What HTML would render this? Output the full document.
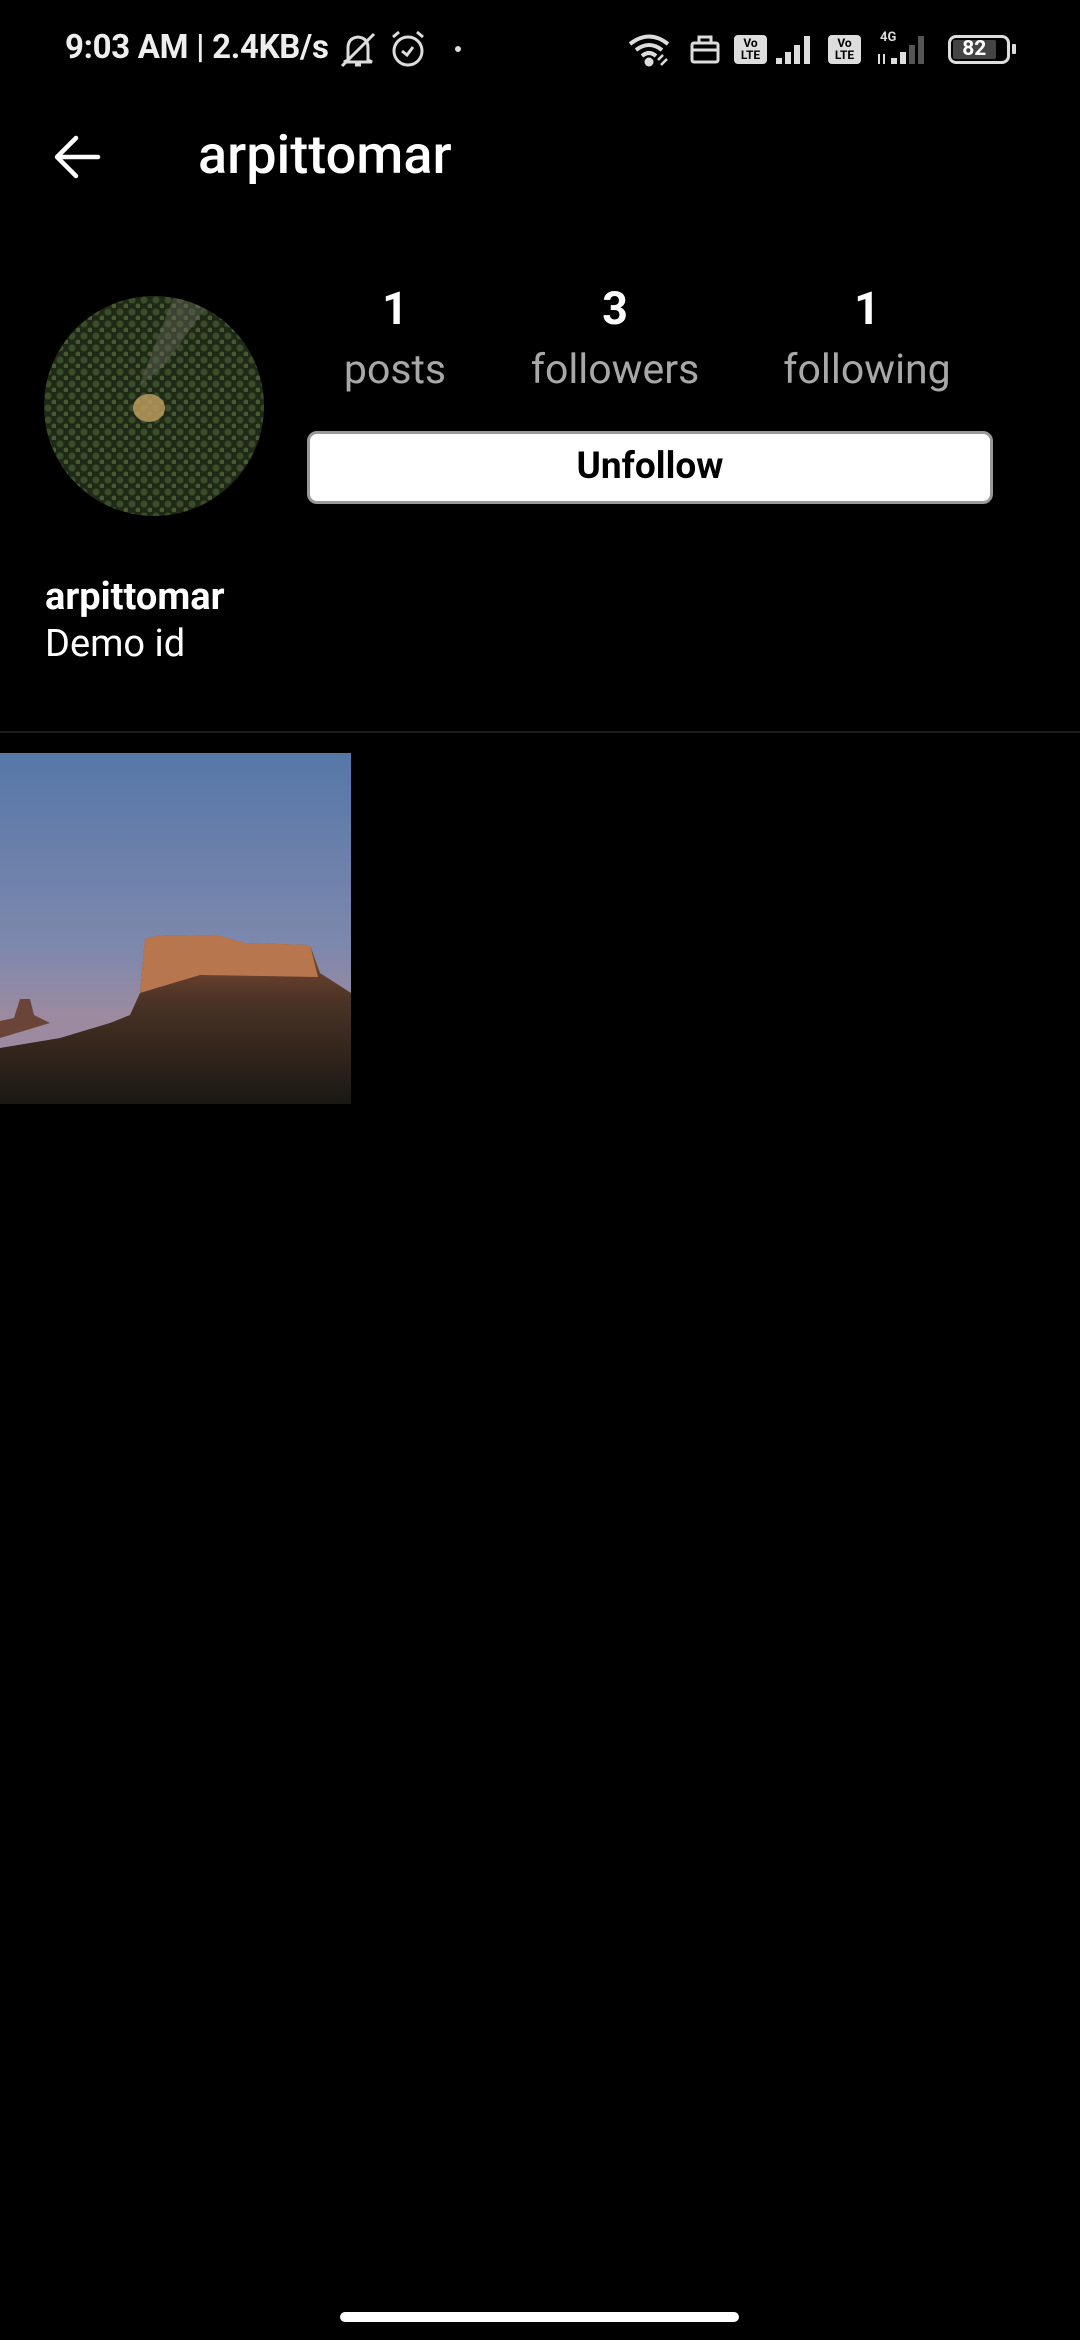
<!DOCTYPE html>
<html><head><meta charset="utf-8"><style>
*{margin:0;padding:0;box-sizing:border-box}
body{width:1080px;height:2340px;background:#000;position:relative;overflow:hidden;font-family:"Roboto","Liberation Sans",sans-serif;color:#fff}
.a{position:absolute}
.st{top:28px;font-size:33px;font-weight:700;color:#eee;letter-spacing:-0.3px;white-space:nowrap}
.num{font-size:45px;font-weight:700;text-align:center;width:240px}
.lbl{font-size:41px;color:#a8a8a8;text-align:center;width:280px}
</style></head><body>
<div class="a st" style="left:65px">9:03 AM | 2.4KB/s</div>
<svg class="a" style="left:338px;top:30px" width="44" height="40" viewBox="0 0 44 40" fill="none" stroke="#ddd" stroke-width="3"><path d="M10 30 L10 18 Q10 8 20 7 Q30 8 30 18 L30 30 L34 32 L6 32Z"/><path d="M17 35 h6"/><path d="M4 36 L36 4"/></svg>
<svg class="a" style="left:388px;top:28px" width="40" height="42" viewBox="0 0 40 42" fill="none" stroke="#ddd" stroke-width="3"><circle cx="20" cy="23" r="14"/><path d="M14 23 l5 4 l6 -8"/><path d="M5 9 l6 -5 M35 9 l-6 -5"/></svg>
<div class="a" style="left:455px;top:46px;width:6px;height:6px;border-radius:50%;background:#ddd"></div>
<svg class="a" style="left:627px;top:33px" width="48" height="34" viewBox="0 0 48 34" fill="none" stroke="#ddd" stroke-width="4"><path d="M3 11 Q22 -4 41 11"/><path d="M9 17 Q22 7 35 17"/><path d="M15 23 Q22 17 29 23"/><circle cx="22" cy="29" r="2.5" fill="#ddd"/><path d="M36 22 l-5 5 M40 26 l-6 6" stroke-width="2.5"/></svg>
<svg class="a" style="left:690px;top:34px" width="30" height="30" viewBox="0 0 30 30" fill="none" stroke="#ddd" stroke-width="3"><rect x="2" y="9" width="26" height="19" rx="2"/><path d="M9 9 V3 H21 V9 M2 16 H28"/></svg>
<div class="a" style="left:734px;top:35px;width:33px;height:29px;background:#ddd;border-radius:4px;color:#000;font-size:12px;font-weight:700;line-height:12px;text-align:center;padding-top:2px">Vo<br>LTE</div>
<svg class="a" style="left:774px;top:34px" width="40" height="30"><path d="M2 30 V24 H8 V30Z M11 30 V18 H17 V30Z M20 30 V11 H26 V30Z M30 30 V2 H36 V30Z" fill="#ddd"/></svg>
<div class="a" style="left:828px;top:35px;width:33px;height:29px;background:#ddd;border-radius:4px;color:#000;font-size:12px;font-weight:700;line-height:12px;text-align:center;padding-top:2px">Vo<br>LTE</div>
<div class="a" style="left:880px;top:30px;font-size:13px;font-weight:700;color:#ddd">4G</div>
<svg class="a" style="left:875px;top:34px" width="60" height="30"><path d="M16 30 V24 H22 V30Z M25 30 V18 H31 V30Z" fill="#ddd"/><path d="M34 30 V11 H40 V30Z M43 30 V2 H49 V30Z" fill="#555"/><path d="M4 30 V20 M9 20 V30" stroke="#ddd" stroke-width="2"/></svg>
<div class="a" style="left:948px;top:35px;width:62px;height:29px;border:3px solid #ddd;border-radius:8px;padding:2px"><div style="background:#444;height:100%;width:82%;border-radius:2px;font-size:21px;font-weight:700;color:#fff;line-height:19px;text-align:center">82</div></div>
<div class="a" style="left:1012px;top:44px;width:4px;height:10px;background:#ddd;border-radius:1px"></div>

<svg class="a" style="left:52px;top:134px" width="50" height="46" viewBox="0 0 50 46" fill="none" stroke="#fff" stroke-width="4.5" stroke-linecap="round" stroke-linejoin="round"><path d="M46 23 H6 M24 4 L5 23 L24 42"/></svg>
<div class="a" style="left:198px;top:124px;font-size:54px;font-weight:500">arpittomar</div>

<svg class="a" style="left:44px;top:296px" width="220" height="220" viewBox="0 0 220 220">
<defs><clipPath id="c"><circle cx="110" cy="110" r="110"/></clipPath>
<pattern id="t" width="12" height="12" patternUnits="userSpaceOnUse"><rect width="12" height="12" fill="#1f2a16"/><circle cx="4" cy="4" r="3.5" fill="#3a4c2a"/><circle cx="10" cy="10" r="2.5" fill="#4a5a34"/></pattern></defs>
<g clip-path="url(#c)"><rect width="220" height="220" fill="url(#t)"/><path d="M130 0 L170 0 L120 70 L95 90Z" fill="#6a6a5e" opacity=".4"/><ellipse cx="105" cy="112" rx="16" ry="14" fill="#b89a5c" opacity=".85"/></g></svg>

<div class="a num" style="left:275px;top:282px">1</div>
<div class="a lbl" style="left:255px;top:346px">posts</div>
<div class="a num" style="left:495px;top:282px">3</div>
<div class="a lbl" style="left:475px;top:346px">followers</div>
<div class="a num" style="left:747px;top:282px">1</div>
<div class="a lbl" style="left:727px;top:346px">following</div>

<div class="a" style="left:307px;top:431px;width:686px;height:73px;background:#fff;border:3px solid #999;border-radius:10px;color:#000;font-size:37px;font-weight:700;text-align:center;line-height:66px">Unfollow</div>

<div class="a" style="left:45px;top:575px;font-size:38px;font-weight:700">arpittomar</div>
<div class="a" style="left:45px;top:622px;font-size:38px">Demo id</div>

<div class="a" style="left:0;top:731px;width:1080px;height:2px;background:#1e1e1e"></div>

<svg class="a" style="left:0;top:753px" width="351" height="351" viewBox="0 0 351 351">
<defs><linearGradient id="s" x1="0" y1="0" x2="0" y2="1"><stop offset="0" stop-color="#5677a8"/><stop offset=".55" stop-color="#7d88ad"/><stop offset=".75" stop-color="#9c8aa0"/></linearGradient>
<linearGradient id="h" x1="0" y1="0" x2="0" y2="1"><stop offset="0" stop-color="#8a5034"/><stop offset=".4" stop-color="#4a3226"/><stop offset="1" stop-color="#1a1812"/></linearGradient></defs>
<rect width="351" height="351" fill="url(#s)"/>
<path d="M0 268 L14 265 L20 246 L30 246 L34 262 L50 270 L0 285Z" fill="#6a4436"/>
<path d="M130 262 L140 240 L145 186 L160 182 L220 183 L245 190 L310 192 L320 220 L351 240 L351 351 L0 351 L0 295 L60 285 L110 270Z" fill="url(#h)"/>
<path d="M140 240 L145 186 L160 182 L220 183 L245 190 L310 192 L318 224 L200 222Z" fill="#b8764e"/>
</svg>

<div class="a" style="left:340px;top:2312px;width:399px;height:10px;background:#fff;border-radius:5px"></div>
</body></html>
